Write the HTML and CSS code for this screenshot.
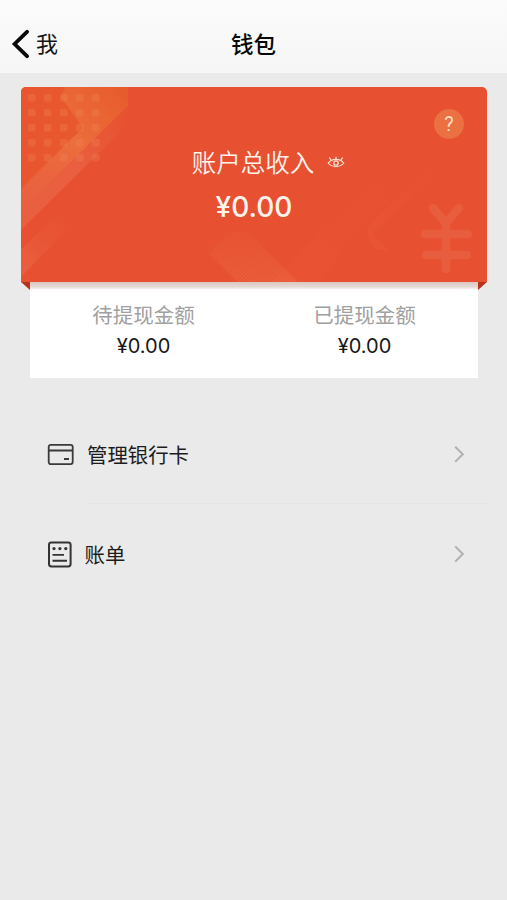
FILE: index.html
```html
<!DOCTYPE html>
<html lang="zh-CN">
<head>
<meta charset="utf-8">
<title>钱包</title>
<link rel="stylesheet" href="styles.css">
</head>
<body>
<header class="nav">
  <a class="back">
    <svg width="18" height="30" viewBox="0 0 18 30"><path d="M16 2.8 3.6 15 16 27.2" fill="none" stroke="#080808" stroke-width="3.8" stroke-linecap="round" stroke-linejoin="miter"/></svg>
    <span>我</span>
  </a>
  <h1>钱包</h1>
</header>
<main>
  <section class="card">
    <svg class="art" viewBox="0 0 466 195" preserveAspectRatio="none">
      <defs>
        <linearGradient id="corner" x1="0" y1="0" x2="1" y2="0"><stop offset="0" stop-color="#e8552f"/><stop offset="1" stop-color="#e85c2c"/></linearGradient>
        <linearGradient id="band" gradientUnits="userSpaceOnUse" x1="0" y1="120" x2="107" y2="10"><stop offset="0" stop-color="#e96040"/><stop offset=".25" stop-color="#ea643f"/><stop offset=".55" stop-color="#ec6d3d"/><stop offset="1" stop-color="#e85c2c"/></linearGradient>
        <linearGradient id="edge" gradientUnits="userSpaceOnUse" x1="0" y1="138" x2="105" y2="33"><stop offset="0" stop-color="#e96040"/><stop offset=".55" stop-color="#e95f40"/><stop offset="1" stop-color="#e75230"/></linearGradient>
        <linearGradient id="band2" gradientUnits="userSpaceOnUse" x1="0" y1="175" x2="62" y2="112"><stop offset="0" stop-color="#e95e3e"/><stop offset="1" stop-color="#e75030" stop-opacity="0"/></linearGradient>
        <linearGradient id="hatchfade" x1="0" y1="0" x2="0" y2="1"><stop offset="0" stop-color="#fff" stop-opacity=".15"/><stop offset="1" stop-color="#fff"/></linearGradient>
        <mask id="fade"><path d="M170 135H290V195H170Z" fill="url(#hatchfade)"/></mask>
        <linearGradient id="beam" gradientUnits="userSpaceOnUse" x1="345" y1="150" x2="420" y2="50"><stop offset="0" stop-color="#ff8060" stop-opacity=".09"/><stop offset="1" stop-color="#ff8060" stop-opacity="0"/></linearGradient>
        <linearGradient id="wide" gradientUnits="userSpaceOnUse" x1="285" y1="150" x2="400" y2="50"><stop offset="0" stop-color="#ff8060" stop-opacity=".05"/><stop offset="1" stop-color="#ff8060" stop-opacity="0"/></linearGradient>
        <pattern id="hatch" width="2.4" height="2.4" patternUnits="userSpaceOnUse" patternTransform="rotate(-44)"><path d="M.5 0v2.4" stroke="#f0805c" stroke-opacity=".42" stroke-width=".8"/></pattern>
        <pattern id="dots" x="7" y="7" width="16" height="15" patternUnits="userSpaceOnUse"><rect width="7.5" height="7.5" rx="2" fill="#f08858" fill-opacity=".3"/></pattern>
      </defs>
      <path d="M0 0H107V19L0 124Z" fill="url(#corner)"/>
      <path d="M0 102 50 52 62 41 40 10 44 0H107V19L0 124Z" fill="url(#band)"/>
      <path d="M0 124 107 19 101 43 0 143Z" fill="url(#edge)"/>
      <path d="M0 162 58 107 66 122 0 190Z" fill="url(#band2)"/>
      <path d="M7 7H79V75H7Z" fill="url(#dots)"/>
      <g mask="url(#fade)"><path d="M183 163 205 140 227 144 277 195H215Z" fill="#ee6b45" opacity=".2"/><path d="M188 167 208 145 227 145 276 195H218Z" fill="url(#hatch)"/></g>
      <path d="M250 195 400 45 415 62 330 150 300 195Z" fill="url(#wide)"/>
      <path d="M347 140 412 76 418 84 359 140 351 147 368 163H357Q345 152 347 140Z" fill="url(#beam)"/>
      <g fill="none" stroke="#e85d3d" stroke-width="8.5" stroke-linecap="round"><path d="M412 121 425 136 438 121M425 136V182M404 147H447M405 168H446"/></g>
    </svg>
    <span class="help">?</span>
    <div class="total-label"><span>账户总收入</span>
      <svg width="18" height="14" viewBox="0 0 18 14" fill="none" stroke="#ffe4d8" stroke-width="1.2" stroke-linecap="round"><path d="M1.2 8C5 3.2 13 3.2 16.8 8 13 12.8 5 12.8 1.2 8Z"/><circle cx="9" cy="8" r="2.2" stroke-width="1.3"/><path d="M3.8 4.6 2.6 2.9M9 3.8V2M14.2 4.6l1.2-1.7"/></svg>
    </div>
    <div class="total">¥0.00</div>
  </section>
  <section class="split">
    <div class="cell"><span class="label">待提现金额</span><span class="amount">¥0.00</span></div>
    <div class="cell"><span class="label">已提现金额</span><span class="amount">¥0.00</span></div>
  </section>
  <nav class="menu">
    <a class="row">
      <svg class="icon" width="27" height="28" viewBox="0 0 27 28" fill="none" stroke="#3a3a3a" stroke-width="1.8"><rect x="1.7" y="4.9" width="24" height="19.2" rx="2"/><path d="M1.7 10.5H25.7M17 19h5"/></svg>
      <span class="name bank">管理银行卡</span>
      <svg width="12" height="18" viewBox="0 0 12 18"><path d="M1.2 1.7 8.8 9.3 1.2 16.9" fill="none" stroke="#b0b0b0" stroke-width="2"/></svg>
    </a>
    <a class="row">
      <svg class="icon" width="27" height="28" viewBox="0 0 27 28" fill="none" stroke="#333" stroke-width="2"><rect x="2" y="2.4" width="21.6" height="24" rx="2.4"/><path d="M5.5 14.9h11.5M5.5 20.8h14.5" stroke-width="1.9"/><g fill="#333" stroke="none"><circle cx="7" cy="8.6" r="1.6"/><circle cx="12.9" cy="8.6" r="1.6"/><circle cx="18.8" cy="8.6" r="1.6"/></g></svg>
      <span class="name">账单</span>
      <svg width="12" height="18" viewBox="0 0 12 18"><path d="M1.2 1.4 8.8 9 1.2 16.6" fill="none" stroke="#b0b0b0" stroke-width="2"/></svg>
    </a>
  </nav>
</main>
</body>
</html>
```
FILE: styles.css
```css
* { box-sizing: border-box; }
body {
  margin: 0;
  min-height: 900px;
  background: #eaeaea;
  color: #1c1c1c;
  font-family: "Noto Sans CJK SC", sans-serif;
}
.nav {
  height: 73px;
  padding: 14px 11px 0;
  display: grid;
  grid-template-columns: 1fr auto 1fr;
  align-items: center;
  background: linear-gradient(#fbfbfb, #f6f6f6);
}
.back { display: flex; align-items: center; gap: 7px; font-size: 22px; line-height: 30px; color: #151515; }
.back span { padding-bottom: 3px; }
.nav h1 { margin: 0; padding-bottom: 2px; font-size: 22.5px; line-height: 30px; font-weight: 500; color: #080808; }
main { padding: 14px 20px 0 21px; }
.card {
  position: relative;
  height: 195px;
  padding-top: 57px;
  border-radius: 5px 5px 0 0;
  background: #e75030;
  color: #fff4ed;
  text-align: center;
}
.art { position: absolute; inset: 0; width: 100%; height: 100%; border-radius: inherit; overflow: hidden; }
.card::before, .card::after {
  content: "";
  position: absolute;
  top: 195px;
  width: 9px;
  height: 8px;
  background: #b7321a;
}
.card::before { left: 0; clip-path: polygon(0 0, 100% 0, 100% 100%); }
.card::after { right: 0; clip-path: polygon(0 0, 100% 0, 0 100%); }
.help {
  position: absolute;
  top: 22px;
  right: 23px;
  width: 30px;
  height: 30px;
  border-radius: 50%;
  background: #eb7042;
  color: #ffdcc4;
  font: 20px/30px Roboto, sans-serif;
}
.total-label {
  position: relative;
  display: flex;
  justify-content: center;
  align-items: center;
  gap: 13px;
  margin-left: 29px;
  width: 437px;
  height: 36px;
  font-size: 24.5px;
  line-height: 36px;
  font-weight: 350;
}
.total {
  position: relative;
  margin-top: 9px;
  font: 500 28px/36px Inter, sans-serif;
}
.split {
  display: flex;
  margin: 0 9px;
  height: 96px;
  padding: 17px 3px 0;
  background: linear-gradient(#dcc6c0, #e5dbd8 5px, #fff 8px);
}
.cell { flex: 1; display: flex; flex-direction: column; align-items: center; }
.label { font-size: 20.5px; line-height: 30px; color: #a0a0a0; }
.amount { margin-top: 2px; font: 20px/30px Inter, sans-serif; color: #171717; }
.menu { margin-top: 27px; }
.row { display: flex; align-items: center; height: 98px; padding: 0 21px 0 26px; }
.row + .row { height: 102px; background: linear-gradient(#e4e4e4, #e4e4e4) 67px 0 / 399px 1px no-repeat; }
.name { flex: 1; margin-left: 10.5px; font-size: 20.4px; line-height: 30px; }
.bank { margin-left: 13px; }
```
